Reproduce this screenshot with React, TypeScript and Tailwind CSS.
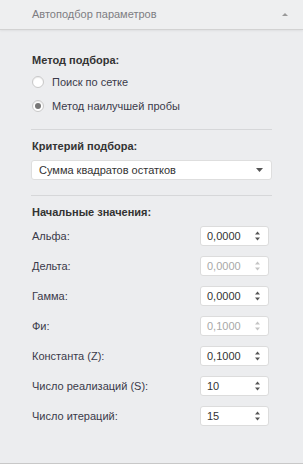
import React from "react";

function Spinner({ disabled }: { disabled?: boolean }) {
  const c = disabled ? "#c4c4c4" : "#555";
  return (
    <svg width="7" height="14" viewBox="0 0 7 14" className="shrink-0">
      <path d="M3.5 2.5 L6 5.5 L1 5.5 Z" fill={c} />
      <path d="M3.5 11.5 L6 8.5 L1 8.5 Z" fill={c} />
    </svg>
  );
}

function NumInput({ value, disabled }: { value: string; disabled?: boolean }) {
  return (
    <div className="w-[69px] h-[20px] bg-white border border-[#dcdcdc] rounded-[3px] flex items-center justify-between pl-[6px] pr-[7px]">
      <span className={disabled ? "text-[#a8a8a8]" : "text-[#333]"}>{value}</span>
      <Spinner disabled={disabled} />
    </div>
  );
}

function Radio({ checked, label }: { checked?: boolean; label: string }) {
  return (
    <div className="flex items-center h-[24px]">
      <div className="w-[12px] h-[12px] rounded-full border border-[#c8c8c8] bg-white flex items-center justify-center shadow-[inset_0_1px_1px_rgba(0,0,0,0.08)]">
        {checked && <div className="w-[6px] h-[6px] rounded-full bg-[#777]" />}
      </div>
      <span className="ml-[8px] text-[#3a3a4a]">{label}</span>
    </div>
  );
}

export default function App() {
  const rows: { label: string; value: string; disabled?: boolean }[] = [
    { label: "Альфа:", value: "0,0000" },
    { label: "Дельта:", value: "0,0000", disabled: true },
    { label: "Гамма:", value: "0,0000" },
    { label: "Фи:", value: "0,1000", disabled: true },
    { label: "Константа (Z):", value: "0,1000" },
    { label: "Число реализаций (S):", value: "10" },
    { label: "Число итераций:", value: "15" },
  ];
  return (
    <div
      className="w-[303px] h-[464px] bg-[#ecedef] flex flex-col text-[11px] text-[#3a3a3a] border-b border-[#c8c8c8] overflow-hidden"
      style={{ fontFamily: '"Liberation Sans", Arial, sans-serif' }}
    >
      <div className="h-[30px] shrink-0 bg-[#eeeff0] border-b border-[#d2d2d2] shadow-[0_1px_2px_rgba(0,0,0,0.06)] flex items-center justify-between pl-[32px] pr-[15px]">
        <span className="text-[#7d7d82] text-[11px]">Автоподбор параметров</span>
        <svg width="6" height="3" viewBox="0 0 6 3">
          <path d="M3 0 L6 3 L0 3 Z" fill="#999" />
        </svg>
      </div>
      <div className="pl-[31px] pr-[31px] pt-[23px] flex flex-col">
        <div className="font-bold text-[#333] pl-[1px] h-[14px] leading-[14px]">Метод подбора:</div>
        <div className="mt-[3px] pl-[1px] flex flex-col">
          <Radio label="Поиск по сетке" />
          <Radio checked label="Метод наилучшей пробы" />
        </div>
        <div className="mt-[11px] h-px bg-[#d6d7d9]" />
        <div className="mt-[9px] font-bold text-[#333] pl-[1px] h-[14px] leading-[14px]">Критерий подбора:</div>
        <div className="mt-[7px] h-[20px] bg-white border border-[#dedede] rounded-[3px] flex items-center justify-between pl-[7px] pr-[8px]">
          <span className="text-[#333]">Сумма квадратов остатков</span>
          <svg width="7" height="4" viewBox="0 0 7 4">
            <path d="M0 0 L7 0 L3.5 4 Z" fill="#555" />
          </svg>
        </div>
        <div className="mt-[15px] h-px bg-[#d6d7d9]" />
        <div className="mt-[9px] font-bold text-[#333] pl-[1px] h-[14px] leading-[14px]">Начальные значения:</div>
        <div className="mt-[2px] flex flex-col pr-[3px]">
          {rows.map((r) => (
            <div key={r.label} className="flex items-center justify-between h-[30px] pl-[1px]">
              <span className="text-[#3a3a4a]">{r.label}</span>
              <NumInput value={r.value} disabled={r.disabled} />
            </div>
          ))}
        </div>
      </div>
    </div>
  );
}
